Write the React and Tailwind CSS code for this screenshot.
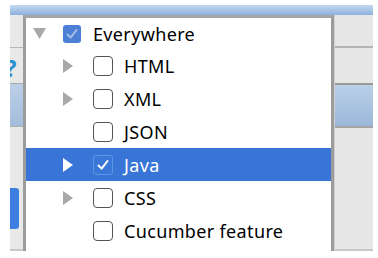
const font = { fontFamily: '"Noto Sans", "Open Sans", sans-serif' };

const items = [
  { label: 'HTML', arrow: true },
  { label: 'XML', arrow: true },
  { label: 'JSON', arrow: false },
  { label: 'Java', arrow: true, checked: true, selected: true },
  { label: 'CSS', arrow: true },
  { label: 'Cucumber feature', arrow: false },
  { label: '', arrow: false },
];

const RightArrow = ({ white }) => (
  <svg width="10" height="14" viewBox="0 0 10 14">
    <path d="M0 0 L10 7 L0 14 Z" fill={white ? '#ffffff' : '#a8a8a8'} />
  </svg>
);

const Check = ({ color }) => (
  <svg width="14" height="14" viewBox="0 0 14 14" fill="none">
    <path d="M2.5 7.5 L5.6 10.6 L11.5 3" stroke={color} strokeWidth="2" strokeLinecap="round" strokeLinejoin="round" />
  </svg>
);

const Row = ({ item }) => (
  <div
    className={`flex h-[33px] shrink-0 items-center pl-[37px] ${item.selected ? 'bg-[#3875d7] text-white' : 'text-black'}`}
  >
    <div className="flex w-[30px] items-center">{item.arrow && <RightArrow white={item.selected} />}</div>
    {item.checked ? (
      <div className="flex h-[20px] w-[20px] items-center justify-center rounded-[3px] border border-[#5d95e8] bg-[#3a78d8]">
        <Check color="#ffffff" />
      </div>
    ) : (
      <div className="h-[20px] w-[20px] rounded-[4px] border-[1.5px] border-[#545454] bg-white" />
    )}
    <span className="ml-[11px] text-[18px] leading-none tracking-[0.35px]" style={font}>
      {item.label}
    </span>
  </div>
);

export default function App() {
  return (
    <div className="h-[258px] w-[378px] overflow-hidden bg-white pl-[10px] pr-[5px] pt-[5px]">
      <div className="h-[10px] bg-gradient-to-b from-[#c3d8ef] to-[#8db1dc]" />
      <div className="flex h-[236px]">
        {/* left window strip */}
        <div className="flex w-[13px] shrink-0 flex-col bg-[#e8e8e8]">
          <div className="h-[33px] shrink-0 border-b border-[#b5b5b5]" />
          <div className="flex h-[36px] shrink-0 items-end overflow-hidden border-b border-[#a8a8a8] pb-[3px]">
            <span className="-ml-[5px] text-[24px] font-bold leading-none text-[#2b8fd2]" style={font}>?</span>
          </div>
          <div className="h-[43px] shrink-0 border-b border-[#b0b0b0] bg-gradient-to-b from-[#bcd0e8] to-[#a2bddc]" />
          <div className="flex flex-1 flex-col border-b-2 border-[#c8c8c8]">
            <div className="mt-[61px] h-[41px] w-[9px] rounded-r-[3px] bg-[#3d7ee0]" />
          </div>
        </div>

        {/* dropdown tree */}
        <div className="flex w-[311px] shrink-0 flex-col overflow-hidden border-x-[3px] border-t-[3px] border-x-[#9c9c9c] border-t-[#a4a4a4] bg-white">
          <div className="flex h-[31px] shrink-0 items-center pl-[7px]">
            <div className="flex w-[30px] items-center">
              <svg width="13" height="11" viewBox="0 0 13 11">
                <path d="M0 0 L13 0 L6.5 11 Z" fill="#a8a8a8" />
              </svg>
            </div>
            <div className="flex h-[18px] w-[18px] items-center justify-center rounded-[3px] bg-[#4c80d6]">
              <Check color="#a7bfe6" />
            </div>
            <span className="ml-[12px] text-[18px] leading-none tracking-[0.35px] text-black" style={font}>
              Everywhere
            </span>
          </div>
          {items.map((item, i) => (
            <Row key={i} item={item} />
          ))}
        </div>

        {/* right window strip */}
        <div className="flex flex-1 flex-col border-l border-[#cfcfcf] bg-[#e6e6e6]">
          <div className="h-[33px] shrink-0 border-b-2 border-[#b3b3b3]" />
          <div className="h-[37px] shrink-0 border-b-2 border-[#9a9a9a]" />
          <div className="h-[43px] shrink-0 border-b-2 border-[#a5a5a5] bg-gradient-to-b from-[#bbd0e8] to-[#9bb7da]" />
          <div className="flex-1 border-b-2 border-[#c8c8c8]" />
        </div>
      </div>
    </div>
  );
}
